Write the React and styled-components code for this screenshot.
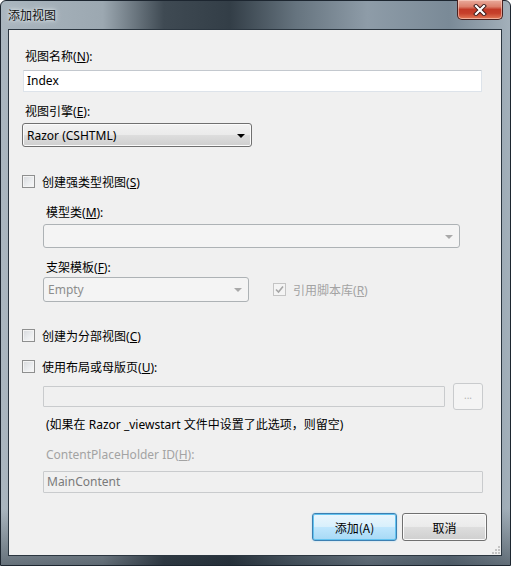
import React from "react";
import styled, { createGlobalStyle, css } from "styled-components";

const Global = createGlobalStyle`
  html, body { margin: 0; padding: 0; background: #fff; }
  body { width: 511px; height: 566px; overflow: hidden; }
  * { box-sizing: border-box; }
`;

const FONT = `"Segoe UI", "Noto Sans", "Noto Sans CJK SC", sans-serif`;

const Window = styled.div`
  width: 511px;
  height: 566px;
  display: flex;
  flex-direction: column;
  padding: 0 8px 9px 7px;
  border: 1px solid #1d2630;
  border-radius: 6px 6px 0 0;
  background:
    linear-gradient(to bottom, rgba(0,0,0,0) 0%, rgba(0,0,0,0) 90%, rgba(20,30,40,0.45) 100%),
    linear-gradient(to right, #aab6bf 0%, #9ca8b1 20%, #3f4a53 32%, #333e47 45%, #66747f 58%, #8e9ca8 72%, #7a8a97 88%, #a3b0ba 100%);
  font-family: ${FONT};
  font-size: 12px;
  color: #000;
`;

const TitleBar = styled.div`
  height: 28px;
  display: flex;
  align-items: flex-start;
  justify-content: space-between;
`;

const Title = styled.div`
  padding-top: 6px;
  font-family: "Noto Sans CJK SC", sans-serif;
  font-size: 12px;
  line-height: 15px;
  color: #111;
  text-shadow: 0 0 6px #e8eef2, 0 0 3px #e8eef2;
`;

const CloseButton = styled.div`
  width: 46px;
  height: 20px;
  margin-top: -1px;
  margin-right: -1px;
  border: 1px solid #4a2220;
  border-top: none;
  border-radius: 0 0 5px 5px;
  background: linear-gradient(to bottom, #e9ab9c 0%, #dc806c 35%, #c23a27 50%, #c6402b 70%, #e27a58 100%);
  box-shadow: inset 0 0 0 1px rgba(255, 220, 210, 0.55);
  display: flex;
  align-items: center;
  justify-content: center;
`;

const Client = styled.div`
  flex: 1;
  position: relative;
  background: #f0f0f0;
  border: 1px solid #2b3640;
  display: flex;
  flex-direction: column;
  padding: 0 0 0 13px;
`;

const Label = styled.div`
  line-height: 15px;
  height: 15px;
  padding-left: 3px;
  margin-top: ${(p) => p.$mt}px;
  color: ${(p) => (p.$disabled ? "#a3a3a3" : "#000")};
  white-space: nowrap;
  u { text-decoration: underline; text-underline-offset: 1px; }
`;

const TextBox = styled.div`
  margin-top: ${(p) => p.$mt || 0}px;
  margin-left: ${(p) => p.$ml || 0}px;
  width: ${(p) => p.$w}px;
  height: ${(p) => p.$h || 22}px;
  border: 1px solid #dde3ea;
  border-top-color: #c3c8ce;
  border-radius: 1px;
  background: ${(p) => (p.$disabled ? "#f0f0f0" : "#fff")};
  ${(p) =>
    p.$disabled &&
    css`
      border-color: #c9cbcd;
    `}
  color: ${(p) => (p.$disabled ? "#7a7a7a" : "#000")};
  line-height: ${(p) => (p.$h || 22) - 2}px;
  padding-left: 3px;
  white-space: nowrap;
`;

const Combo = styled.div`
  margin-top: ${(p) => p.$mt || 0}px;
  width: ${(p) => p.$w}px;
  height: ${(p) => p.$h}px;
  border: 1px solid #707070;
  border-radius: 3px;
  background: linear-gradient(to bottom, #f2f2f2 0%, #ebebeb 48%, #dddddd 52%, #cfcfcf 100%);
  box-shadow: inset 0 0 0 1px #fbfbfb;
  display: flex;
  align-items: center;
  justify-content: space-between;
  padding: 0 6px 0 4px;
  ${(p) =>
    p.$disabled &&
    css`
      border-color: #adb2b5;
      background: #f4f4f4;
      box-shadow: none;
      color: #8d8d8d;
    `}
`;

const Arrow = styled.span`
  width: 0;
  height: 0;
  border-left: 4px solid transparent;
  border-right: 4px solid transparent;
  border-top: 4px solid ${(p) => (p.$disabled ? "#a9a9a9" : "#000")};
  margin-top: 1px;
`;

const CheckRow = styled.label`
  display: flex;
  align-items: center;
  gap: 7px;
  height: 15px;
  line-height: 15px;
  margin-top: ${(p) => p.$mt || 0}px;
  margin-left: ${(p) => p.$ml || 0}px;
  color: ${(p) => (p.$disabled ? "#a3a3a3" : "#000")};
  white-space: nowrap;
  u { text-decoration: underline; text-underline-offset: 1px; }
`;

const Box = styled.span`
  width: 13px;
  height: 13px;
  flex: none;
  border: 1px solid ${(p) => (p.$disabled ? "#c4c4c4" : "#8e8f8f")};
  background: ${(p) =>
    p.$disabled
      ? "#f4f4f4"
      : "linear-gradient(135deg, #d7d9dc 0%, #eceef0 60%, #f8f8f8 100%)"};
  box-shadow: inset 0 0 0 1px #f4f4f4;
  display: flex;
  align-items: center;
  justify-content: center;
`;

const Indent = styled.div`
  display: flex;
  flex-direction: column;
  padding-left: 21px;
`;

const Row = styled.div`
  display: flex;
  align-items: center;
  margin-top: ${(p) => p.$mt || 0}px;
  gap: ${(p) => p.$gap || 0}px;
`;

const BrowseButton = styled.div`
  width: 30px;
  height: 27px;
  border: 1px solid #c9cbcd;
  border-radius: 3px;
  background: #f4f4f4;
  color: #b3b3b3;
  display: flex;
  align-items: center;
  justify-content: center;
  font-size: 10px;
  padding-bottom: 3px;
`;

const Buttons = styled.div`
  display: flex;
  gap: 5px;
  margin-top: 20px;
  padding-left: 290px;
`;

const Button = styled.div`
  width: 85px;
  height: 28px;
  border: 1px solid #707070;
  border-radius: 3px;
  background: linear-gradient(to bottom, #f2f2f2 0%, #ebebeb 48%, #dddddd 52%, #cfcfcf 100%);
  box-shadow: inset 0 0 0 1px #fbfbfb;
  display: flex;
  align-items: center;
  justify-content: center;
  font-family: "Noto Sans CJK SC", ${FONT};
  ${(p) =>
    p.$default &&
    css`
      border-color: #3c7fb1;
      background: linear-gradient(to bottom, #eaf6fd 0%, #d9f0fc 48%, #bee6fd 52%, #a7d9f5 100%);
      box-shadow: inset 0 0 0 1px #62c3f0, 0 0 2px #9fd8f5;
    `}
`;

const Grip = styled.svg`
  position: absolute;
  right: 1px;
  bottom: 1px;
`;

const Cjk = styled.span`
  font-family: "Noto Sans CJK SC", sans-serif;
`;

export default function App() {
  return (
    <>
      <Global />
      <Window>
        <TitleBar>
          <Title>添加视图</Title>
          <CloseButton>
            <svg width="14" height="12" viewBox="0 0 14 12">
              <path d="M3 2 L11 10 M11 2 L3 10" stroke="#3a1a18" strokeWidth="4" strokeLinecap="square" />
              <path d="M3 2 L11 10 M11 2 L3 10" stroke="#fff" strokeWidth="2.2" strokeLinecap="square" />
            </svg>
          </CloseButton>
        </TitleBar>
        <Client>
          <Label $mt={18}>
            <Cjk>视图名称</Cjk>(<u>N</u>):
          </Label>
          <TextBox $mt={7} $ml={1} $w={459} $h={22}>Index</TextBox>
          <Label $mt={11}>
            <Cjk>视图引擎</Cjk>(<u>E</u>):
          </Label>
          <Combo $mt={5} $w={230} $h={24}>
            <span>Razor (CSHTML)</span>
            <Arrow />
          </Combo>
          <CheckRow $mt={27}>
            <Box />
            <span>
              <Cjk>创建强类型视图</Cjk>(<u>S</u>)
            </span>
          </CheckRow>
          <Indent>
            <Label $mt={15}>
              <Cjk>模型类</Cjk>(<u>M</u>):
            </Label>
            <Combo $mt={5} $w={417} $h={24} $disabled>
              <span />
              <Arrow $disabled />
            </Combo>
            <Label $mt={11}>
              <Cjk>支架模板</Cjk>(<u>F</u>):
            </Label>
            <Row $mt={3}>
              <Combo $w={206} $h={25} $disabled>
                <span>Empty</span>
                <Arrow $disabled />
              </Combo>
              <CheckRow $ml={24} $disabled>
                <Box $disabled>
                  <svg width="9" height="9" viewBox="0 0 9 9">
                    <path d="M1 4.5 L3.5 7 L8 1.5" fill="none" stroke="#a6a6a6" strokeWidth="1.6" />
                  </svg>
                </Box>
                <span>
                  <Cjk>引用脚本库</Cjk>(<u>R</u>)
                </span>
              </CheckRow>
            </Row>
          </Indent>
          <CheckRow $mt={26}>
            <Box />
            <span>
              <Cjk>创建为分部视图</Cjk>(<u>C</u>)
            </span>
          </CheckRow>
          <CheckRow $mt={16}>
            <Box />
            <span>
              <Cjk>使用布局或母版页</Cjk>(<u>U</u>):
            </span>
          </CheckRow>
          <Indent>
            <Row $mt={9} $gap={8}>
              <TextBox $w={402} $h={21} $disabled />
              <BrowseButton>...</BrowseButton>
            </Row>
            <Label $mt={6}>
              (<Cjk>如果在</Cjk> Razor _viewstart <Cjk>文件中设置了此选项，则留空</Cjk>)
            </Label>
            <Label $mt={16} $disabled>
              ContentPlaceHolder ID(<u>H</u>):
            </Label>
            <TextBox $mt={9} $w={440} $h={22} $disabled>MainContent</TextBox>
          </Indent>
          <Buttons>
            <Button $default>
              <Cjk>添加</Cjk>(A)
            </Button>
            <Button>
              <Cjk>取消</Cjk>
            </Button>
          </Buttons>
          <Grip width="8" height="8" viewBox="0 0 8 8">
            {[
              [6, 0],
              [6, 3],
              [3, 3],
              [6, 6],
              [3, 6],
              [0, 6],
            ].map(([x, y]) => (
              <rect key={`${x}-${y}`} x={x} y={y} width="2" height="2" fill="#c4c4c4" />
            ))}
          </Grip>
        </Client>
      </Window>
    </>
  );
}
